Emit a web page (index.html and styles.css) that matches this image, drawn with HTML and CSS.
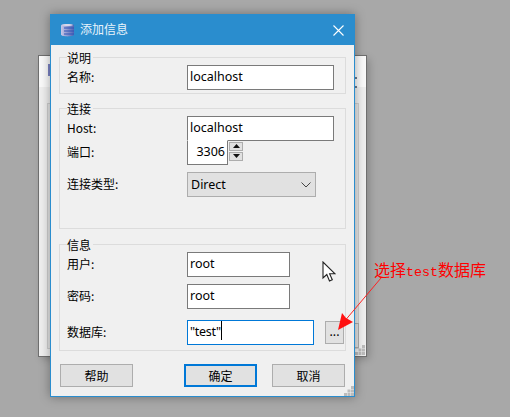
FILE: index.html
```html
<!DOCTYPE html>
<html lang="zh">
<head>
<meta charset="utf-8">
<title>添加信息</title>
<link rel="stylesheet" href="styles.css">
</head>
<body>
<div class="desktop">
  <div class="back-window">
    <div class="back-header"></div>
    <div class="back-panel"></div>
    <div class="back-button"></div>
    <span class="back-dot back-dot-a"></span>
    <span class="back-dot back-dot-b"></span>
    <span class="back-icon"></span>
    <svg class="grip back-grip" width="10" height="10" viewBox="0 0 10 10">
      <path fill="#bcbcbc" d="M7 0h3v3H7zM3.500 3.500h3v3h-3zM7 3.500h3v3H7zM0 7h3v3H0zM3.500 7h3v3h-3zM7 7h3v3H7z"/>
    </svg>
  </div>

  <div class="dialog">
    <header class="titlebar">
      <svg class="title-icon" width="16" height="16" viewBox="0 0 16 16">
        <defs>
          <linearGradient id="dbside" x1="0" x2="1" y1="0" y2="0">
            <stop offset="0" stop-color="#c8c8e8"/>
            <stop offset="1" stop-color="#4f63b4"/>
          </linearGradient>
        </defs>
        <path fill="url(#dbside)" d="M1 3.500C1 1.500 14 1.500 14 3.500V12.500C14 15 1 15 1 12.500Z"/>
        <path fill="#d8d8ea" d="M2 3c2-1.200 9-1.200 11 0-2 1.400-9 1.400-11 0Z"/>
        <path stroke="#2f55b5" stroke-width="1.200" fill="none" d="M4 6h10M4 9h10M4 12h10"/>
      </svg>
      <span class="title-text">添加信息</span>
      <svg class="close-icon" width="11" height="11" viewBox="0 0 11 11">
        <path d="M.5.500l10 10M10.500.500l-10 10" stroke="#fff" stroke-width="1.100" fill="none"/>
      </svg>
    </header>

    <div class="body">
      <section class="group group-desc">
        <div class="legend">说明</div>
        <div class="row">
          <label class="label">名称:</label>
          <div class="input wide">localhost</div>
        </div>
      </section>

      <section class="group group-conn">
        <div class="legend">连接</div>
        <div class="row">
          <label class="label">Host:</label>
          <div class="input wide">localhost</div>
        </div>
        <div class="row row-port">
          <label class="label">端口:</label>
          <div class="input port">3306</div>
          <div class="spin">
            <span class="spin-btn"><svg width="7" height="4" viewBox="0 0 7 4"><path d="M0 4L3.500 0 7 4Z" fill="#111"/></svg></span>
            <span class="spin-btn"><svg width="7" height="4" viewBox="0 0 7 4"><path d="M0 0L3.500 4 7 0Z" fill="#111"/></svg></span>
          </div>
        </div>
        <div class="row row-type">
          <label class="label">连接类型:</label>
          <div class="combo">
            <span class="combo-text">Direct</span>
            <svg width="10" height="6" viewBox="0 0 10 6"><path d="M.5.500L5 5 9.500.500" stroke="#444" stroke-width="1" fill="none"/></svg>
          </div>
        </div>
      </section>

      <section class="group group-info">
        <div class="legend">信息</div>
        <div class="row">
          <label class="label">用户:</label>
          <div class="input medium">root</div>
        </div>
        <div class="row row-pass">
          <label class="label">密码:</label>
          <div class="input medium">root</div>
        </div>
        <div class="row row-db">
          <label class="label">数据库:</label>
          <div class="input db"><span class="db-text">"test"</span><span class="caret"></span></div>
          <button class="btn browse">...</button>
        </div>
      </section>

      <footer class="actions">
        <button class="btn action">帮助</button>
        <button class="btn action primary">确定</button>
        <button class="btn action">取消</button>
      </footer>
    </div>
    <svg class="grip dialog-grip" width="10" height="10" viewBox="0 0 10 10">
      <path fill="#bcbcbc" d="M7 0h3v3H7zM3.500 3.500h3v3h-3zM7 3.500h3v3H7zM0 7h3v3H0zM3.500 7h3v3h-3zM7 7h3v3H7z"/>
    </svg>
  </div>

  <svg class="cursor" width="14" height="22" viewBox="0 0 14 22">
    <path d="M1 1V17L4.800 13.500 7.500 20 10.300 18.800 7.600 12.700H12.800Z" fill="#fff" stroke="#222" stroke-width="1.100"/>
  </svg>

  <svg class="arrow" width="60" height="60" viewBox="0 0 60 60">
    <path d="M49 1L11 46" stroke="#f22" stroke-width="1" fill="none"/>
    <path d="M6 53L10 36 14 41 21 45Z" fill="#f11"/>
  </svg>
  <div class="note">选择<span class="note-latin">test</span>数据库</div>
</div>
</body>
</html>
```

FILE: styles.css
```css
* { box-sizing: border-box; }

html, body {
  margin: 0;
  padding: 0;
  background: #a8a8a8;
}

.desktop {
  position: relative;
  width: 510px;
  height: 417px;
  overflow: hidden;
  background: #a8a8a8;
  font-family: "Noto Sans CJK SC", "Noto Sans", sans-serif;
  font-size: 12px;
  color: #000;
}

.back-window {
  position: absolute;
  left: 39px;
  top: 56px;
  width: 327px;
  height: 300px;
  background: #efefef;
  box-shadow: 0 0 0 1px #6f6f6f, 3px 3px 8px rgba(0, 0, 0, .22);
}

.back-header {
  height: 31px;
  background: #fafafa;
}

.back-panel {
  position: absolute;
  left: 8px;
  right: 7px;
  top: 47px;
  bottom: 7px;
  border: 1px solid #cfcfcf;
  background: #e6e6e6;
}

.back-button {
  position: absolute;
  left: 316px;
  top: 267px;
  width: 4px;
  height: 25px;
  background: #e1e1e1;
  border: 1px solid #adadad;
  border-left: 0;
}

.back-dot {
  position: absolute;
  left: 316px;
  width: 2px;
  height: 2px;
  background: #6d7b8f;
}
.back-dot-a { top: 21px; }
.back-dot-b { top: 30px; }

.back-icon {
  position: absolute;
  left: 9px;
  top: 8px;
  width: 2px;
  height: 12px;
  background: #7d84c4;
}

.grip { position: absolute; }
.back-grip { right: 1px; bottom: 1px; }
.dialog-grip { right: 0; bottom: 0; }

.dialog {
  position: absolute;
  left: 50px;
  top: 14px;
  width: 305px;
  height: 383px;
  display: flex;
  flex-direction: column;
  background: #f0f0f0;
  border: 1px solid #2a8dce;
  box-shadow: 0 0 10px rgba(0, 0, 0, .35);
}

.titlebar {
  flex: none;
  height: 30px;
  display: flex;
  align-items: center;
  padding: 0 10px 0 9px;
  background: #2a8dce;
  color: #fff;
}

.title-icon { flex: none; margin-right: 4px; }
.title-text { flex: 1; font-size: 12px; line-height: 16px; padding-bottom: 2px; color: #e8f3fb; }

.body {
  flex: 1;
  padding: 12px 8px 0;
}

.group {
  position: relative;
  border: 1px solid #dcdcdc;
  padding: 7px 0 0 7px;
  margin-bottom: 14px;
}
.group-desc { height: 37px; }
.group-conn { height: 121px; margin-bottom: 15px; }
.group-info { height: 107px; margin-bottom: 13px; }

.legend {
  position: absolute;
  left: 7px;
  top: -9px;
  line-height: 17px;
  padding-right: 2px;
  background: #f0f0f0;
}

.row {
  display: flex;
  align-items: center;
  height: 25px;
}
.row-port { margin-top: -1px; position: relative; }
.row-type { margin-top: 7px; }
.row-pass { margin-top: 7px; }
.row-db { margin-top: 11px; }

.label {
  flex: none;
  width: 120px;
  line-height: 17px;
  padding-bottom: 2px;
}

.input {
  flex: none;
  height: 25px;
  line-height: 21px;
  padding: 0 2px;
  border: 1px solid #7a7a7a;
  background: #fff;
  font-family: "Noto Sans", "Noto Sans CJK SC", sans-serif;
  font-size: 12.500px;
  white-space: nowrap;
}
.wide { width: 147px; }
.medium { width: 103px; }
.port {
  width: 41px;
  border-top-color: #fff;
  text-align: right;
  padding-right: 2px;
}
.db {
  width: 127px;
  border-color: #0078d7;
}

.db-text { letter-spacing: -.3px; }

.caret {
  display: inline-block;
  width: 1px;
  height: 19px;
  margin-left: 0;
  vertical-align: -4px;
  background: #000;
}

.spin {
  display: flex;
  flex-direction: column;
  gap: 1px;
  margin: -3px 0 0 1px;
}

.spin-btn {
  display: flex;
  align-items: center;
  justify-content: center;
  width: 14px;
  height: 9px;
  background: #e1e1e1;
  border: 1px solid #adadad;
}

.combo {
  flex: none;
  width: 129px;
  height: 25px;
  display: flex;
  align-items: center;
  justify-content: space-between;
  padding: 0 4px 0 3px;
  background: #e1e1e1;
  border: 1px solid #adadad;
  font-family: "Noto Sans", "Noto Sans CJK SC", sans-serif;
  font-size: 12.500px;
}

.combo-text { line-height: 21px; }

.btn {
  margin: 0;
  padding: 0;
  background: #e1e1e1;
  border: 1px solid #adadad;
  font-family: "Noto Sans CJK SC", "Noto Sans", sans-serif;
  font-size: 12px;
  color: #000;
}

.browse {
  flex: none;
  width: 19px;
  height: 23px;
  margin-left: 11px;
  padding-bottom: 3px;
  line-height: 14px;
}

.actions {
  display: flex;
  padding-left: 1px;
}

.action {
  width: 73px;
  height: 23px;
}
.primary {
  margin: 0 15px 0 51px;
  border: 2px solid #0078d7;
}

.cursor {
  position: absolute;
  left: 322px;
  top: 261px;
}

.arrow {
  position: absolute;
  left: 332px;
  top: 277px;
}

.note {
  position: absolute;
  left: 374px;
  top: 258px;
  font-size: 16px;
  line-height: 23px;
  color: #f00;
  white-space: nowrap;
}

.note-latin {
  font-family: "Liberation Mono", monospace;
  font-size: 13.300px;
}
```
